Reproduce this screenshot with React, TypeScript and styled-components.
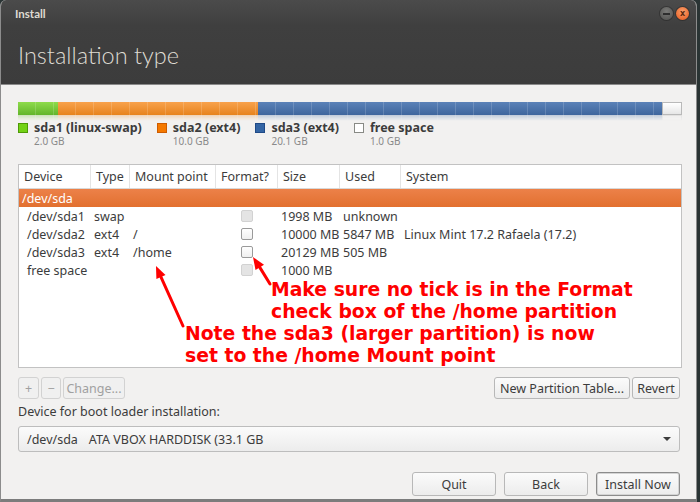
import React from "react";
import styled, { createGlobalStyle } from "styled-components";

const UI = `"Noto Sans", "Lato", sans-serif`;
const LIGHT = `"Lato", "Noto Sans", sans-serif`;

const GlobalStyle = createGlobalStyle`
  html, body { margin: 0; padding: 0; background: #2a3434; }
  #root { width: 700px; height: 502px; }
`;

const Window = styled.div`
  position: relative;
  box-sizing: border-box;
  width: 697px;
  height: 502px;
  display: flex;
  flex-direction: column;
  background: #f2f1f0;
  border-left: 1px solid #8c8c8c;
  border-right: 1px solid #8c8c8c;
  border-bottom: 3px solid #7c7c7c;
  border-radius: 6px 6px 0 0;
  overflow: hidden;
  font-family: ${UI};
  color: #3c3c3c;
`;

const Header = styled.header`
  box-sizing: border-box;
  height: 85px;
  flex: none;
  background: linear-gradient(#4b4b4b 0, #3f3f3f 26px, #3c3c3c 100%);
  border-bottom: 1px solid #8a8a8a;
  display: flex;
  flex-direction: column;
`;

const TopRow = styled.div`
  height: 27px;
  display: flex;
  align-items: center;
  padding: 0 7px 0 14px;
`;

const WinTitle = styled.span`
  flex: 1;
  font: bold 11.5px ${LIGHT};
  color: #dfdbd2;
`;

const Controls = styled.div`
  display: flex;
  align-items: center;
  gap: 3px;
`;

const CtrlBtn = styled.div<{ $close?: boolean }>`
  width: 13px;
  height: 13px;
  border-radius: 50%;
  display: flex;
  align-items: center;
  justify-content: center;
  font: bold 8px "DejaVu Sans", sans-serif;
  color: #5a2a10;
  background: ${(p) =>
    p.$close
      ? "radial-gradient(circle at 50% 35%, #fba06c, #e4561a)"
      : "radial-gradient(circle at 50% 35%, #7a7a78, #50504e)"};
  box-shadow: 0 0 0 1px rgba(0, 0, 0, 0.25);
`;

const MinBar = styled.span`
  width: 7px;
  height: 2px;
  background: #2e2e2e;
`;

const Heading = styled.h1`
  margin: 14px 0 0 17px;
  font: 300 23.5px/28px ${LIGHT};
  color: #dfdbd2;
`;

const Content = styled.main`
  flex: 1;
  display: flex;
  flex-direction: column;
  padding: 17px 14px 0 17px;
`;

const BarTrack = styled.div`
  display: flex;
  height: 13px;
`;

const BarSeg = styled.div<{ $c1: string; $c2: string; $free?: boolean }>`
  box-sizing: border-box;
  background: ${(p) =>
    p.$free
      ? `linear-gradient(${p.$c1}, ${p.$c2})`
      : `repeating-linear-gradient(90deg, transparent 0 17px, rgba(255,255,255,0.16) 17px 18px), linear-gradient(${p.$c1}, ${p.$c2})`};
  border: ${(p) => (p.$free ? "1px solid #b9b9b9" : "none")};
`;

const Reflection = styled.div`
  display: flex;
  height: 6px;
  opacity: 0.28;
  -webkit-mask-image: linear-gradient(#000, transparent);
  mask-image: linear-gradient(#000, transparent);
`;

const Legend = styled.div`
  display: flex;
  gap: 15px;
  margin-top: 0;
`;

const LegendItem = styled.div`
  display: grid;
  grid-template-columns: 10px auto;
  column-gap: 6px;
  align-items: start;
`;

const Swatch = styled.span<{ $c: string; $b: string }>`
  box-sizing: border-box;
  width: 10px;
  height: 10px;
  margin-top: 2px;
  background: ${(p) => p.$c};
  border: 1px solid ${(p) => p.$b};
`;

const LegendLabel = styled.span`
  font: bold 12.5px/14px ${UI};
  color: #3c3c3c;
`;

const LegendSize = styled.span`
  grid-column: 2;
  font: 10px/12px ${UI};
  color: #8a8a8a;
`;

const Table = styled.div`
  box-sizing: border-box;
  margin-top: 17px;
  height: 204px;
  background: #fff;
  border: 1px solid #c2c2c2;
  display: flex;
  flex-direction: column;
`;

const COLS = "72px 39px 86px 62px 62px 61px 1fr";

const HeadRow = styled.div`
  display: grid;
  grid-template-columns: ${COLS};
  height: 23px;
  border-bottom: 1px solid #d8d8d8;
`;

const HeadCell = styled.div<{ $last?: boolean }>`
  display: flex;
  align-items: center;
  padding-left: 5px;
  font: 12.5px ${UI};
  color: #3c3c3c;
  white-space: nowrap;
  border-right: ${(p) => (p.$last ? "none" : "1px solid #e4e4e4")};
`;

const DiskRow = styled.div`
  height: 18px;
  display: flex;
  align-items: center;
  padding-left: 3px;
  background: linear-gradient(#ec8149, #e2702f);
  color: #fff;
  font: 12.5px ${UI};
`;

const Row = styled.div`
  display: grid;
  grid-template-columns: ${COLS};
  height: 18px;
  font: 12.5px ${UI};
  color: #3c3c3c;
`;

const Cell = styled.div<{ $indent?: boolean; $center?: boolean }>`
  display: flex;
  align-items: center;
  justify-content: ${(p) => (p.$center ? "center" : "flex-start")};
  padding-left: ${(p) => (p.$indent ? "8px" : p.$center ? "0" : "3px")};
  white-space: nowrap;
`;

const Check = styled.span<{ $disabled?: boolean }>`
  box-sizing: border-box;
  width: 12px;
  height: 12px;
  border-radius: 2px;
  border: 1px solid ${(p) => (p.$disabled ? "#d2d2d2" : "#9a9a9a")};
  background: ${(p) => (p.$disabled ? "#e4e4e4" : "linear-gradient(#ffffff, #f0f0f0)")};
`;

const Toolbar = styled.div`
  display: flex;
  align-items: center;
  margin-top: 9px;
  margin-right: 2px;
`;

const BtnGroup = styled.div`
  display: flex;
  gap: 2px;
`;

const Spacer = styled.div`
  flex: 1;
`;

const Button = styled.button<{ $w?: number; $h?: number; $disabled?: boolean; $default?: boolean }>`
  box-sizing: border-box;
  width: ${(p) => (p.$w ? `${p.$w}px` : "auto")};
  height: ${(p) => p.$h ?? 22}px;
  padding: 0 3px;
  border-radius: 3px;
  border: 1px solid ${(p) => (p.$default ? "#8c8c8c" : p.$disabled ? "#d2d2d2" : "#b8b8b8")};
  box-shadow: ${(p) => (p.$default ? "inset 0 0 0 1px #d4d4d4" : "none")};
  background: ${(p) => (p.$disabled ? "#f0f0f0" : "linear-gradient(#fbfbfb, #ececec)")};
  color: ${(p) => (p.$disabled ? "#a0a0a0" : "#3c3c3c")};
  font: 12.5px ${UI};
  display: flex;
  align-items: center;
  justify-content: center;
  white-space: nowrap;
`;

const FieldLabel = styled.div`
  margin-top: 6px;
  font: 12.5px/14px ${UI};
  color: #3c3c3c;
`;

const Combo = styled.div`
  box-sizing: border-box;
  margin-top: 7px;
  margin-right: 2px;
  height: 26px;
  border: 1px solid #bdbdbd;
  border-radius: 3px;
  background: linear-gradient(#fbfbfb, #ececec);
  display: flex;
  align-items: center;
  padding: 0 8px 0 8px;
  font: 12.5px ${UI};
  color: #3c3c3c;
`;

const ComboDev = styled.span`
  margin-right: 11px;
`;

const Arrow = styled.span`
  margin-left: auto;
  width: 0;
  height: 0;
  border-left: 4px solid transparent;
  border-right: 4px solid transparent;
  border-top: 4px solid #3c3c3c;
`;

const Footer = styled.div`
  display: flex;
  justify-content: flex-end;
  gap: 8px;
  margin-top: 20px;
  margin-right: 2px;
`;

const Note = styled.div<{ $x: number; $y: number }>`
  position: absolute;
  left: ${(p) => p.$x}px;
  top: ${(p) => p.$y}px;
  font: bold 18.8px/22px "DejaVu Sans", sans-serif;
  color: #ff0000;
  white-space: nowrap;
`;

const Overlay = styled.svg`
  position: absolute;
  left: -1px;
  top: 0;
  pointer-events: none;
`;

const segments = [
  { w: 40, c1: "#8edb4c", c2: "#62b52a" },
  { w: 200, c1: "#f8a24c", c2: "#e7831d" },
  { w: 404, c1: "#5b82b8", c2: "#3f669d" },
  { w: 20, c1: "#ffffff", c2: "#e6e6e6", free: true },
];

const legend = [
  { label: "sda1 (linux-swap)", size: "2.0 GB", c: "#73d216", b: "#4e9a06" },
  { label: "sda2 (ext4)", size: "10.0 GB", c: "#f57900", b: "#ce5c00" },
  { label: "sda3 (ext4)", size: "20.1 GB", c: "#3465a4", b: "#204a87" },
  { label: "free space", size: "1.0 GB", c: "#ffffff", b: "#888a85" },
];

const rows = [
  { dev: "/dev/sda1", type: "swap", mount: "", dis: true, size: "1998 MB", used: "unknown", sys: "" },
  { dev: "/dev/sda2", type: "ext4", mount: "/", dis: false, size: "10000 MB", used: "5847 MB", sys: "Linux Mint 17.2 Rafaela (17.2)" },
  { dev: "/dev/sda3", type: "ext4", mount: "/home", dis: false, size: "20129 MB", used: "505 MB", sys: "" },
  { dev: "free space", type: "", mount: "", dis: true, size: "1000 MB", used: "", sys: "" },
];

const headers = ["Device", "Type", "Mount point", "Format?", "Size", "Used", "System"];

function Bar({ reflect }: { reflect?: boolean }) {
  const Track = reflect ? Reflection : BarTrack;
  return (
    <Track>
      {segments.map((s, i) => (
        <BarSeg key={i} $c1={reflect ? s.c2 : s.c1} $c2={reflect ? s.c1 : s.c2} $free={s.free} style={{ width: s.w }} />
      ))}
    </Track>
  );
}

export default function App() {
  return (
    <>
      <GlobalStyle />
      <Window>
        <Header>
          <TopRow>
            <WinTitle>Install</WinTitle>
            <Controls>
              <CtrlBtn>
                <MinBar />
              </CtrlBtn>
              <CtrlBtn $close>x</CtrlBtn>
            </Controls>
          </TopRow>
          <Heading>Installation type</Heading>
        </Header>
        <Content>
          <Bar />
          <Bar reflect />
          <Legend>
            {legend.map((l) => (
              <LegendItem key={l.label}>
                <Swatch $c={l.c} $b={l.b} />
                <LegendLabel>{l.label}</LegendLabel>
                <LegendSize>{l.size}</LegendSize>
              </LegendItem>
            ))}
          </Legend>
          <Table>
            <HeadRow>
              {headers.map((h, i) => (
                <HeadCell key={h} $last={i === headers.length - 1}>
                  {h}
                </HeadCell>
              ))}
            </HeadRow>
            <DiskRow>/dev/sda</DiskRow>
            {rows.map((r) => (
              <Row key={r.dev}>
                <Cell $indent>{r.dev}</Cell>
                <Cell>{r.type}</Cell>
                <Cell>{r.mount}</Cell>
                <Cell $center>
                  <Check $disabled={r.dis} />
                </Cell>
                <Cell>{r.size}</Cell>
                <Cell>{r.used}</Cell>
                <Cell>{r.sys}</Cell>
              </Row>
            ))}
          </Table>
          <Toolbar>
            <BtnGroup>
              <Button $w={21} $disabled>+</Button>
              <Button $w={20} $disabled>−</Button>
              <Button $w={62} $disabled>Change...</Button>
            </BtnGroup>
            <Spacer />
            <BtnGroup>
              <Button $w={136}>New Partition Table...</Button>
              <Button $w={48}>Revert</Button>
            </BtnGroup>
          </Toolbar>
          <FieldLabel>Device for boot loader installation:</FieldLabel>
          <Combo>
            <ComboDev>/dev/sda</ComboDev>
            <span>ATA VBOX HARDDISK (33.1 GB</span>
            <Arrow />
          </Combo>
          <Footer>
            <Button $w={84} $h={24}>Quit</Button>
            <Button $w={84} $h={24}>Back</Button>
            <Button $w={84} $h={24} $default>Install Now</Button>
          </Footer>
        </Content>

        <Overlay width={700} height={502} viewBox="0 0 700 502">
          <g stroke="#ff0000" strokeWidth={3} fill="#ff0000" strokeLinecap="round">
            <line x1={183} y1={326} x2={160.9} y2={276.9} />
            <polygon points="156,266 165.5,274.9 156.4,279" stroke="none" />
            <line x1={270} y1={284} x2={259.8} y2={267.4} />
            <polygon points="253,257 264,264.8 255.5,270" stroke="none" />
          </g>
        </Overlay>
        <Note $x={270} $y={279}>
          Make sure no tick is in the Format
          <br />
          check box of the /home partition
        </Note>
        <Note $x={184} $y={323}>
          Note the sda3 (larger partition) is now
          <br />
          set to the /home Mount point
        </Note>
      </Window>
    </>
  );
}
